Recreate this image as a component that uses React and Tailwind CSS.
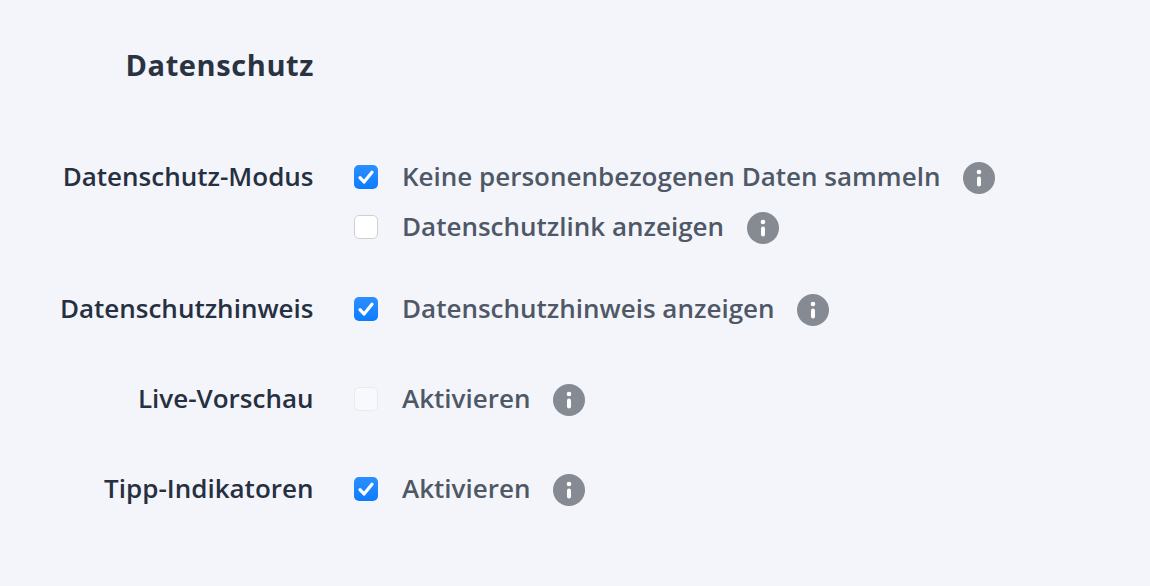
function Info() {
  return (
    <svg width="32" height="32" viewBox="0 0 32 32" className="ml-[22.6px] mt-[2px] shrink-0">
      <circle cx="16" cy="16" r="16" fill="#858a93" />
      <circle cx="16" cy="10" r="2.3" fill="#fff" />
      <rect x="14" y="14.5" width="4" height="10" rx="2" fill="#fff" />
    </svg>
  );
}

function Check({ state }) {
  if (state === "on") {
    return (
      <span className="w-6 h-6 shrink-0 rounded-[5px] bg-gradient-to-b from-[#2b8fff] to-[#0a7cff] flex items-center justify-center">
        <svg width="24" height="24" viewBox="0 0 24 24">
          <path d="M6 12.6 L10 17 L18 7.2" fill="none" stroke="#fff" strokeWidth="3.2" strokeLinecap="round" strokeLinejoin="round" />
        </svg>
      </span>
    );
  }
  if (state === "disabled") {
    return <span className="w-6 h-6 shrink-0 rounded-[5px] bg-[#f8f9fc] border border-[#e9eaee]" />;
  }
  return <span className="w-6 h-6 shrink-0 rounded-[5px] bg-white border border-[#cfd0d3]" />;
}

function Option({ state, text }) {
  return (
    <div className="flex items-center h-8">
      <Check state={state} />
      <span className="ml-6 mb-[2px] text-[26px] leading-8 font-semibold text-[#4f5866] whitespace-nowrap">{text}</span>
      <Info />
    </div>
  );
}

function Row({ label, children, className }) {
  return (
    <div className={"flex " + className}>
      <div className="w-[313.5px] shrink-0 h-8 flex items-center justify-end pb-[2px] text-[26px] font-semibold text-[#263040] whitespace-nowrap">{label}</div>
      <div className="ml-[40.5px] flex flex-col gap-[18px]">{children}</div>
    </div>
  );
}

export default function App() {
  return (
    <div className="w-[1150px] h-[586px] bg-[#f4f5fb] overflow-hidden pt-[45px] font-['Open_Sans',sans-serif]">
      <div className="w-[314px] h-10 flex items-center justify-end text-[29px] font-bold tracking-[0.6px] text-[#2a3342]">Datenschutz</div>
      <Row label="Datenschutz-Modus" className="mt-[76px]">
        <Option state="on" text="Keine personenbezogenen Daten sammeln" />
        <Option state="off" text="Datenschutzlink anzeigen" />
      </Row>
      <Row label="Datenschutzhinweis" className="mt-[50px]">
        <Option state="on" text="Datenschutzhinweis anzeigen" />
      </Row>
      <Row label="Live-Vorschau" className="mt-[58px]">
        <Option state="disabled" text="Aktivieren" />
      </Row>
      <Row label="Tipp-Indikatoren" className="mt-[58px]">
        <Option state="on" text="Aktivieren" />
      </Row>
    </div>
  );
}
